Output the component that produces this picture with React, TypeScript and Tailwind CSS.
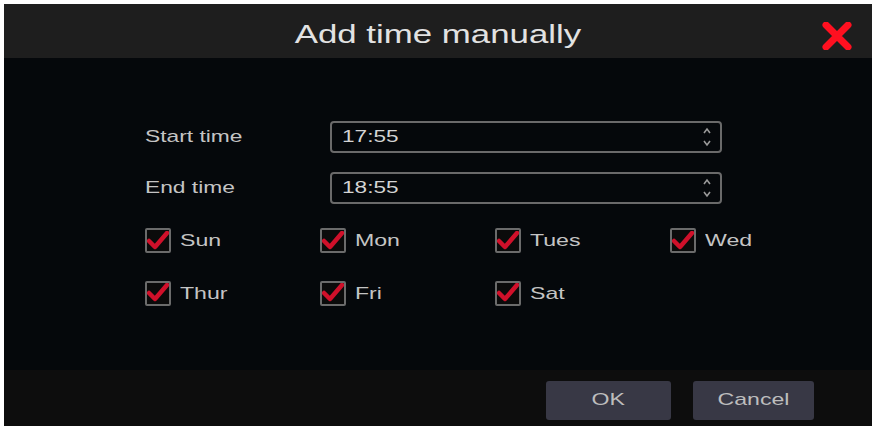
import React from "react";

const days = [
  ["Sun", "Mon", "Tues", "Wed"],
  ["Thur", "Fri", "Sat"],
];

function Check({ label }: { label: string }) {
  return (
    <div className="flex items-center gap-[9px] w-[175px]">
      <div className="w-[26px] h-[25px] border-2 border-[#6b6b6b] rounded-[2px] bg-[#0b0b0b] flex items-center justify-center">
        <svg width="22" height="20" viewBox="0 0 22 20">
          <path d="M2 10 L8 16 L20 2" fill="none" stroke="#d0102a" strokeWidth="4.5" strokeLinecap="round" strokeLinejoin="round" />
        </svg>
      </div>
      <span className="inline-block origin-left scale-x-[1.36] text-[17px] text-[#c4c4c4]">{label}</span>
    </div>
  );
}

function Field({ label, value }: { label: string; value: string }) {
  return (
    <div className="flex items-center h-[32px]">
      <div className="w-[185px]">
        <span className="inline-block origin-left scale-x-[1.34] text-[17px] text-[#c4c4c4]">{label}</span>
      </div>
      <div className="w-[392px] h-[32px] border-2 border-[#6a6a6a] rounded-[4px] flex items-center justify-between pl-[10px] pr-[8px]">
        <span className="inline-block origin-left scale-x-[1.33] text-[17px] text-[#d4d4d4]">{value}</span>
        <svg width="10" height="22" viewBox="0 0 10 22">
          <path d="M2 7 L5 3 L8 7" fill="none" stroke="#9a9a9a" strokeWidth="1.6" />
          <path d="M2 15 L5 19 L8 15" fill="none" stroke="#9a9a9a" strokeWidth="1.6" />
        </svg>
      </div>
    </div>
  );
}

export default function App() {
  return (
    <div
      className="w-[876px] h-[426px] bg-white pt-[4px] px-[4px] flex flex-col"
      style={{ fontFamily: '"Liberation Sans", Arial, sans-serif' }}
    >
      <div className="flex-1 flex flex-col bg-[#05080b]">
        <div className="h-[54px] bg-[#1e1e1e] relative flex items-center justify-center pt-[6px]">
          <span className="inline-block scale-x-[1.34] text-[26px] text-[#e2e2e2]">Add time manually</span>
          <svg className="absolute right-[20px] top-[18px]" width="30" height="28" viewBox="0 0 30 28">
            <path d="M4 3 L26 25 M26 3 L4 25" stroke="#ff1020" strokeWidth="7" strokeLinecap="round" />
          </svg>
        </div>
        <div className="flex-1 flex flex-col pl-[141px] pt-[63px]">
          <div className="flex flex-col gap-[19px]">
            <Field label="Start time" value="17:55" />
            <Field label="End time" value="18:55" />
          </div>
          <div className="flex flex-col gap-[27px] mt-[24px]">
            {days.map((row, i) => (
              <div key={i} className="flex">
                {row.map((d) => (
                  <Check key={d} label={d} />
                ))}
              </div>
            ))}
          </div>
        </div>
        <div className="h-[56px] bg-[#0d0d0d] flex items-center justify-end gap-[22px] pr-[58px] pt-[4px]">
          <button className="w-[125px] h-[39px] bg-[#383845] rounded-[3px] text-[17px] text-[#bdbdbd]">
            <span className="inline-block scale-x-[1.36]">OK</span>
          </button>
          <button className="w-[121px] h-[39px] bg-[#383845] rounded-[3px] text-[17px] text-[#bdbdbd]">
            <span className="inline-block scale-x-[1.36]">Cancel</span>
          </button>
        </div>
      </div>
    </div>
  );
}
